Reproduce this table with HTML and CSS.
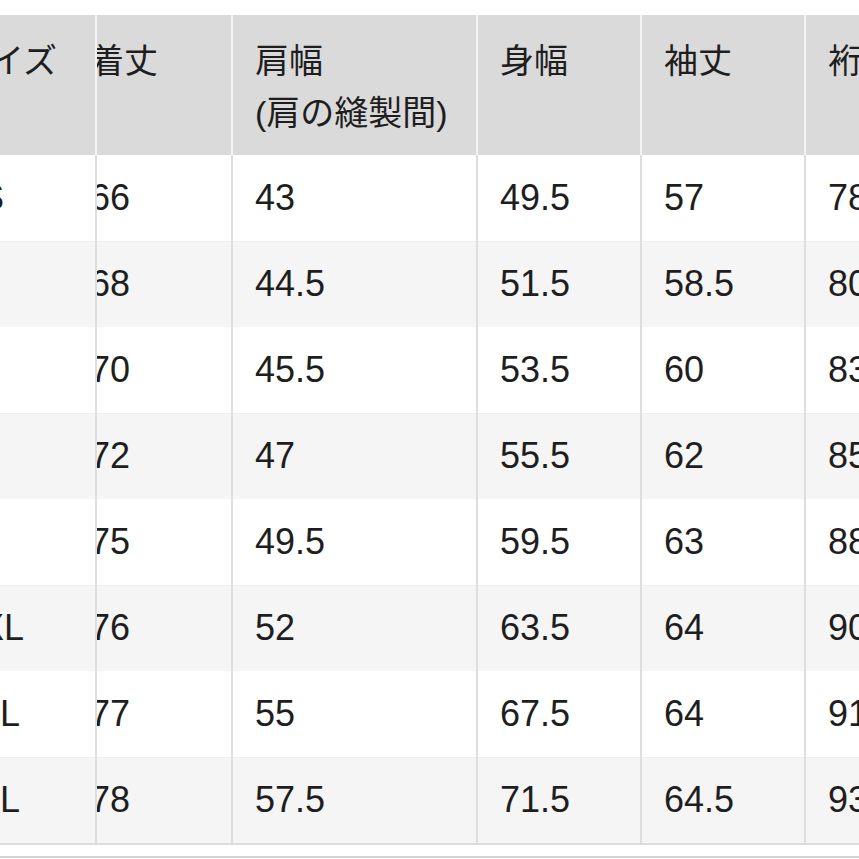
FILE: index.html
```html
<!DOCTYPE html>
<html lang="ja">
<head>
<meta charset="utf-8">
<title>サイズ表</title>
<link rel="stylesheet" href="styles.css">
</head>
<body>
<div class="viewport">
  <table class="size-table">
    <colgroup>
      <col class="c0">
      <col class="c1">
      <col class="c2">
      <col class="c3">
      <col class="c4">
      <col class="c5">
    </colgroup>
    <thead>
      <tr>
        <th class="sticky">サイズ</th>
        <th class="scrolled"><div class="clip"><span class="shift">着丈</span></div></th>
        <th>肩幅<br>(肩の縫製間)</th>
        <th>身幅</th>
        <th>袖丈</th>
        <th>裄丈</th>
      </tr>
    </thead>
    <tbody>
      <tr><td class="sticky">XS</td><td class="scrolled"><div class="clip"><span class="shift">66</span></div></td><td>43</td><td>49.5</td><td>57</td><td>78</td></tr>
      <tr><td class="sticky">S</td><td class="scrolled"><div class="clip"><span class="shift">68</span></div></td><td>44.5</td><td>51.5</td><td>58.5</td><td>80</td></tr>
      <tr><td class="sticky">M</td><td class="scrolled"><div class="clip"><span class="shift">70</span></div></td><td>45.5</td><td>53.5</td><td>60</td><td>83</td></tr>
      <tr><td class="sticky">L</td><td class="scrolled"><div class="clip"><span class="shift">72</span></div></td><td>47</td><td>55.5</td><td>62</td><td>85</td></tr>
      <tr><td class="sticky">XL</td><td class="scrolled"><div class="clip"><span class="shift">75</span></div></td><td>49.5</td><td>59.5</td><td>63</td><td>88</td></tr>
      <tr><td class="sticky">XXL</td><td class="scrolled"><div class="clip"><span class="shift">76</span></div></td><td>52</td><td>63.5</td><td>64</td><td>90</td></tr>
      <tr><td class="sticky">3XL</td><td class="scrolled"><div class="clip"><span class="shift">77</span></div></td><td>55</td><td>67.5</td><td>64</td><td>91</td></tr>
      <tr><td class="sticky">4XL</td><td class="scrolled"><div class="clip"><span class="shift">78</span></div></td><td>57.5</td><td>71.5</td><td>64.5</td><td>93</td></tr>
    </tbody>
  </table>
  <div class="footer-rule"></div>
</div>
</body>
</html>
```

FILE: styles.css
```css
html, body {
  margin: 0;
  padding: 0;
  background: #ffffff;
}

.viewport {
  width: 859px;
  height: 859px;
  overflow: hidden;
  padding-top: 15px;
  box-sizing: border-box;
}

.size-table {
  margin-left: -61px;
  width: 1030px;
  table-layout: fixed;
  border-collapse: separate;
  border-spacing: 0;
  font-family: "Liberation Sans", "Noto Sans CJK JP", sans-serif;
  color: #1e1e1e;
  border-bottom: 2px solid #dcdcdc;
}

.c0 { width: 156px; }
.c1 { width: 136px; }
.c2 { width: 245px; }
.c3 { width: 164px; }
.c4 { width: 164px; }
.c5 { width: 165px; }

.size-table th {
  height: 140px;
  box-sizing: border-box;
  background: #dadada;
  font-weight: normal;
  font-size: 34px;
  line-height: 52px;
  text-align: left;
  vertical-align: top;
  padding: 20px 0 0 22px;
  border-left: 2px solid #f4f4f4;
  white-space: nowrap;
  overflow: hidden;
}

.size-table td {
  height: 86px;
  box-sizing: border-box;
  font-size: 36px;
  text-align: left;
  vertical-align: middle;
  padding: 0 0 0 22px;
  border-left: 2px solid #dedede;
  white-space: nowrap;
  overflow: hidden;
}

.size-table th.sticky,
.size-table td.sticky {
  border-left: none;
  padding-left: 17px;
}

.size-table tbody tr:nth-child(even) td {
  background: #f5f5f5;
  box-shadow: inset 0 1px 0 #eeeeee;
}

.size-table th.scrolled,
.size-table td.scrolled {
  padding-left: 0;
}

.clip {
  overflow: hidden;
  padding-left: 22px;
}

.shift {
  display: inline-block;
  margin-left: -29px;
}

.footer-rule {
  margin-top: 11px;
  border-top: 2px solid #d4d4d4;
  width: 859px;
}
```
